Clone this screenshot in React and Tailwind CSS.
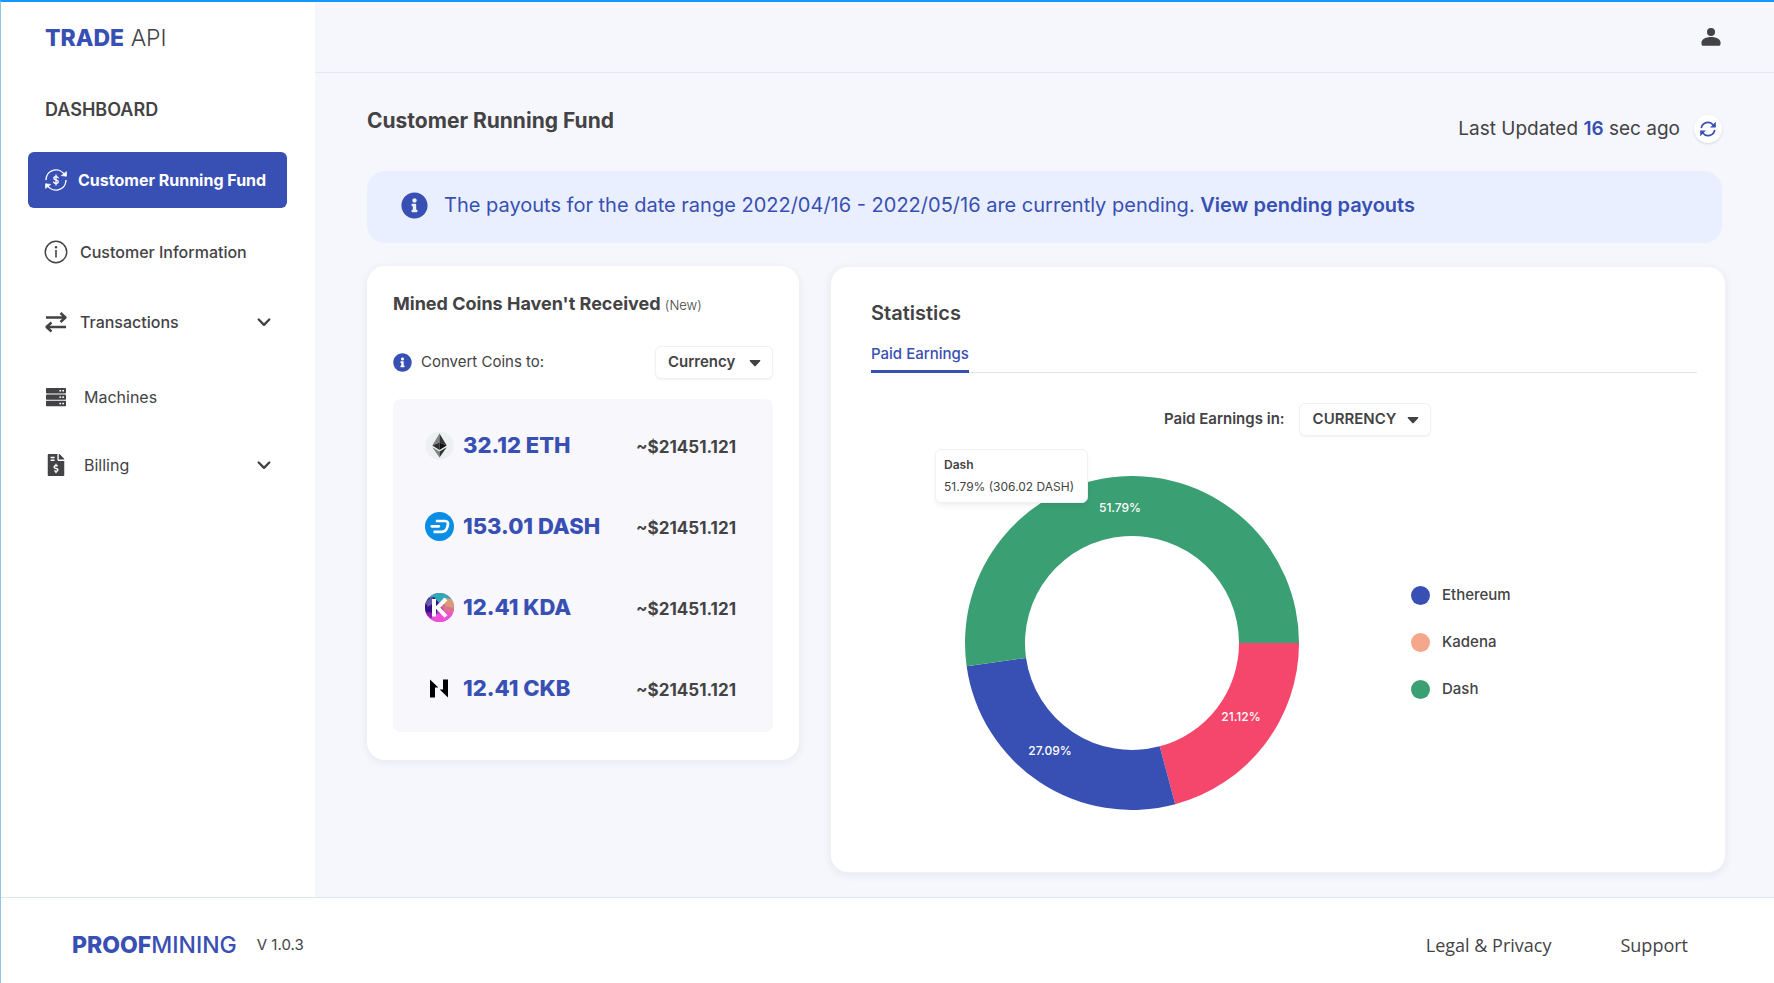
import { FaInfoCircle, FaFileInvoiceDollar } from 'react-icons/fa';

function FundIcon() {
  return (
    <svg viewBox="0 0 24 24" className="size-6 shrink-0" fill="none" stroke="currentColor" strokeWidth="1.4" strokeLinecap="round" strokeLinejoin="round" aria-hidden="true">
      <path d="M2 11.5A10 10 0 0 1 20.8 7.2" />
      <path d="M22 12.5A10 10 0 0 1 3.2 16.8" />
      <path d="M22.4 4v4.2l-4.600-.6z" fill="currentColor" strokeWidth="0.8" />
      <path d="M1.600 20v-4.200l4.600.6z" fill="currentColor" strokeWidth="0.8" />
      <path d="M14.200 9.800c-.4-.8-1.200-1.200-2.200-1.200-1.200 0-2.200.6-2.200 1.600 0 2.300 4.500 1.200 4.500 3.600 0 1-1 1.600-2.300 1.600-1.100 0-2-.5-2.400-1.300M12 7v10" strokeWidth="1.3" />
    </svg>
  );
}

function InfoOutlineIcon() {
  return (
    <svg viewBox="0 0 24 24" className="size-6 shrink-0" fill="none" stroke="currentColor" strokeWidth="1.5" aria-hidden="true">
      <circle cx="12" cy="12" r="10.7" />
      <path d="M12 10v7.500" strokeWidth="1.600" />
      <circle cx="12" cy="7.200" r="1.200" fill="currentColor" stroke="none" />
    </svg>
  );
}

function TransferIcon() {
  return (
    <svg viewBox="0 0 24 24" className="size-6 shrink-0" fill="none" stroke="currentColor" strokeWidth="2.400" strokeLinejoin="round" aria-hidden="true">
      <path d="M2 7.500h18.500M16.500 3l5 4.500-5 4.500" />
      <path d="M22 17H3.500M7.500 12.500l-5 4.500 5 4.500" />
    </svg>
  );
}

function ServerIcon() {
  return (
    <svg viewBox="0 0 24 24" className="size-6 shrink-0" aria-hidden="true">
      {[3, 9.4, 15.8].map((y) => (
        <g key={y}>
          <rect x="2" y={y} width="20" height="5.4" rx="0.8" fill="currentColor" />
          <rect x="15.4" y={y + 2} width="1.700" height="1.500" fill="white" />
          <rect x="18.300" y={y + 2} width="1.700" height="1.500" fill="white" />
        </g>
      ))}
    </svg>
  );
}

function BillingIcon() {
  return (
    <span className="flex w-6 shrink-0 justify-center">
      <FaFileInvoiceDollar className="size-[22px]" aria-hidden="true" />
    </span>
  );
}

function ChevronIcon() {
  return (
    <svg viewBox="0 0 14 14" className="size-[14px] shrink-0" fill="none" stroke="currentColor" strokeWidth="2.400" strokeLinecap="round" strokeLinejoin="round" aria-hidden="true">
      <path d="M1.700 4.500 7 9.800l5.300-5.300" />
    </svg>
  );
}

function PersonIcon() {
  return (
    <svg viewBox="0 0 20 20" className="size-5" fill="currentColor" aria-hidden="true">
      <circle cx="10" cy="5" r="4" />
      <path d="M.5 15.500C.5 12 5 9.900 10 9.900s9.500 2.100 9.500 5.600V17c0 1-.6 1.800-1.800 1.800H2.300C1.100 18.800.5 18 .5 17z" />
    </svg>
  );
}

function RefreshIcon() {
  return (
    <svg viewBox="0 0 16 16" className="size-4" fill="none" stroke="currentColor" strokeWidth="1.700" aria-hidden="true">
      <path d="M1.300 7.200A6.700 6.700 0 0 1 13.200 4" />
      <path d="M14.700 8.800A6.700 6.700 0 0 1 2.800 12" />
      <path d="M15.800.8v5.700h-5.700z" fill="currentColor" stroke="none" />
      <path d="M.2 15.200V9.500h5.700z" fill="currentColor" stroke="none" />
    </svg>
  );
}

function CaretIcon() {
  return (
    <svg viewBox="0 0 12 8" className="pointer-events-none absolute top-1/2 right-3 h-2 w-3 -translate-y-1/2" fill="currentColor" aria-hidden="true">
      <path d="M1.400 1h9.200c.7 0 1 .7.5 1.200L6.700 6.900a1 1 0 0 1-1.400 0L.9 2.200C.4 1.700.7 1 1.400 1z" />
    </svg>
  );
}

function EthLogo() {
  return (
    <svg viewBox="0 0 29 29" className="size-[29px] shrink-0" aria-hidden="true">
      <circle cx="14.500" cy="14.500" r="14" fill="#ecf0f0" />
      <path d="M14.500 2.500 7.300 14.600l7.200-3.200z" fill="#828384" />
      <path d="m14.500 2.500 7.200 12.100-7.200-3.200z" fill="#343535" />
      <path d="m7.300 14.600 7.200-3.200v7.500z" fill="#2f3030" />
      <path d="m21.700 14.600-7.200-3.200v7.500z" fill="#131313" />
      <path d="m7.300 16.200 7.200 4.300v6z" fill="#828384" />
      <path d="m21.700 16.200-7.200 4.300v6z" fill="#343535" />
    </svg>
  );
}

function DashLogo() {
  return (
    <svg viewBox="0 0 29 29" className="size-[29px] shrink-0" aria-hidden="true">
      <circle cx="14.500" cy="14.500" r="14.500" fill="#0a8de4" />
      <path d="M10.800 9h9.200c2.500 0 3.500 1.800 2.800 4.200l-.6 2.200c-.8 2.700-2.600 4.400-5.300 4.400H8.500" fill="none" stroke="white" strokeWidth="2.700" />
      <path d="M6.800 14.300h7" stroke="white" strokeWidth="2.700" strokeLinecap="round" />
    </svg>
  );
}

function KadenaLogo() {
  return (
    <svg viewBox="0 0 29 29" className="size-[29px] shrink-0" aria-hidden="true">
      <defs>
        <clipPath id="kda-disc">
          <circle cx="14.500" cy="14.500" r="14.500" />
        </clipPath>
      </defs>
      <g clipPath="url(#kda-disc)">
        <rect width="29" height="29" fill="#b23fb4" />
        <path d="M0 0h29v8L14 9 0 11z" fill="#2fa9b5" />
        <path d="M0 6l9-2 5 6-3 12-11 1z" fill="#35128c" />
        <path d="M0 9l7-5 3 5-7 5z" fill="#6559a8" />
        <path d="M18 5l11 1v10l-9-1z" fill="#d99a78" />
        <path d="M16 12l8 2 5 1v7l-9-2z" fill="#e0708f" />
        <path d="M0 20l12 1 10-2 7 2v8H0z" fill="#ee4fd6" />
        <path d="M0 19l9 1-3 6z" fill="#8d1fb0" />
        <path d="M9 6v17.500M21 6l-8.500 8.500 8.500 9" fill="none" stroke="white" strokeWidth="4" />
      </g>
    </svg>
  );
}

function NervosLogo() {
  return (
    <svg viewBox="0 0 29 29" className="size-[29px] shrink-0" aria-hidden="true">
      <path d="M5 5.500 13.300 13.500H10V23.500H5z" fill="black" />
      <path d="M23 23.500 14.700 15.500H18V5.500h5z" fill="black" />
    </svg>
  );
}

const coins = [
  { logo: EthLogo, amount: '32.12 ETH', value: '~$21451.121' },
  { logo: DashLogo, amount: '153.01 DASH', value: '~$21451.121' },
  { logo: KadenaLogo, amount: '12.41 KDA', value: '~$21451.121' },
  { logo: NervosLogo, amount: '12.41 CKB', value: '~$21451.121' },
];

const slices = [
  { from: 0, to: 75, color: '#f4476b', label: '21.12%', x: 276, y: 240 },
  { from: 75, to: 172, color: '#384fb3', label: '27.09%', x: 85, y: 274 },
  { from: 172, to: 360, color: '#3a9f73', label: '51.79%', x: 155, y: 31 },
];

function ringPath(from, to) {
  const c = 167;
  const outer = 167;
  const inner = 107;
  const at = (r, deg) => {
    const a = (deg * Math.PI) / 180;
    return `${c + r * Math.cos(a)} ${c + r * Math.sin(a)}`;
  };
  const large = to - from > 180 ? 1 : 0;
  return `M${at(outer, from)}A${outer} ${outer} 0 ${large} 1 ${at(outer, to)}L${at(inner, to)}A${inner} ${inner} 0 ${large} 0 ${at(inner, from)}Z`;
}

function Donut() {
  return (
    <div className="relative">
      <svg viewBox="0 0 334 334" className="size-[334px]" role="img" aria-label="Paid earnings by coin">
        {slices.map((s) => (
          <path key={s.label} d={ringPath(s.from, s.to)} fill={s.color} />
        ))}
        {slices.map((s) => (
          <text key={s.label} x={s.x} y={s.y} textAnchor="middle" dominantBaseline="central" fill="white" className="text-xs font-medium">
            {s.label}
          </text>
        ))}
      </svg>
      <div className="absolute -top-[27px] -left-[30px] flex min-w-[153px] flex-col gap-1 rounded-md border border-[#f1f1f3] bg-white px-2 py-[6px] whitespace-nowrap shadow-md shadow-black/5">
        <span className="text-xs leading-[18px] font-semibold">Dash</span>
        <span className="text-xs leading-[18px]">51.79% (306.02 DASH)</span>
      </div>
    </div>
  );
}

const legend = [
  { name: 'Ethereum', dot: 'bg-[#384fb3]' },
  { name: 'Kadena', dot: 'bg-[#f6a68b]' },
  { name: 'Dash', dot: 'bg-[#3a9f73]' },
];

function Sidebar() {
  return (
    <aside className="w-[314px] shrink-0 bg-white">
      <div className="px-11 pt-[21px] text-[23px] leading-[30px]">
        <span className="font-extrabold text-[#384fb3]">TRADE</span> <span className="font-light">API</span>
      </div>
      <h2 className="px-11 pt-[45px] text-lg leading-6 font-semibold">DASHBOARD</h2>
      <nav className="flex flex-col pt-[30px] pr-7 pl-[27px] text-base" aria-label="Dashboard">
        <a href="#fund" className="flex h-14 items-center gap-[10px] rounded-md bg-[#384fb3] px-4 font-bold whitespace-nowrap text-white" aria-current="page">
          <FundIcon />
          Customer Running Fund
        </a>
        <a href="#information" className="mt-4 flex h-14 items-center gap-3 px-4 font-medium">
          <InfoOutlineIcon />
          Customer Information
        </a>
        <button type="button" className="mt-[14px] flex h-14 items-center gap-3 px-4 text-left font-medium">
          <TransferIcon />
          <span className="flex-1">Transactions</span>
          <ChevronIcon />
        </button>
        <a href="#machines" className="mt-[19px] flex h-14 items-center gap-4 px-4">
          <ServerIcon />
          Machines
        </a>
        <button type="button" className="mt-3 flex h-14 items-center gap-4 px-4 text-left">
          <BillingIcon />
          <span className="flex-1">Billing</span>
          <ChevronIcon />
        </button>
      </nav>
    </aside>
  );
}

function CoinsCard() {
  return (
    <section className="w-[432px] shrink-0 rounded-[18px] bg-white px-[26px] pt-[25px] pb-7 shadow-[0_2px_8px_rgba(40,50,90,0.08)]">
      <h2 className="text-lg leading-[26px] font-bold whitespace-nowrap">
        Mined Coins Haven't Received <span className="text-[13px] font-light">(New)</span>
      </h2>
      <div className="mt-7 flex items-center justify-between">
        <label htmlFor="convert" className="flex items-center gap-[9px] text-[15px]">
          <FaInfoCircle className="size-[19px] text-[#384fb3]" aria-hidden="true" />
          Convert Coins to:
        </label>
        <div className="relative">
          <select id="convert" className="h-[33px] w-[118px] appearance-none rounded-md border border-[#f1f1f4] bg-white pl-3 text-[15px] font-semibold shadow-xs">
            <option>Currency</option>
          </select>
          <CaretIcon />
        </div>
      </div>
      <ul className="mt-5 flex flex-col gap-[41px] rounded-lg bg-[#f7f7fc] pt-[26px] pr-[37px] pb-6 pl-8">
        {coins.map(({ logo: Logo, amount, value }) => (
          <li key={amount} className="flex h-10 items-center">
            <Logo />
            <span className="ml-[9px] flex-1 text-[22px] font-extrabold text-[#384fb3]">{amount}</span>
            <span className="pt-[6px] text-[17px] font-bold">{value}</span>
          </li>
        ))}
      </ul>
    </section>
  );
}

function StatisticsCard() {
  return (
    <section className="min-w-0 flex-1 rounded-[18px] border border-[#f0f1f5] bg-white px-10 pt-8 pb-[62px] shadow-[0_2px_8px_rgba(40,50,90,0.08)]">
      <h2 className="text-xl leading-7 font-semibold">Statistics</h2>
      <div className="-mr-3 mt-3 flex border-b border-[#e3e4e8]" role="tablist">
        <button type="button" role="tab" aria-selected="true" className="-mb-px border-b-3 border-[#384fb3] pt-1 pb-[5px] text-[15px] leading-[22px] font-medium text-[#384fb3]">
          Paid Earnings
        </button>
      </div>
      <div className="mt-[30px] ml-[293px] flex items-center gap-[14px]">
        <label htmlFor="earnings" className="text-[15px] font-semibold">Paid Earnings in:</label>
        <div className="relative">
          <select id="earnings" className="h-[33px] w-[132px] appearance-none rounded-md border border-[#f1f1f4] bg-white pl-[13px] text-[15px] font-semibold shadow-xs">
            <option>CURRENCY</option>
          </select>
          <CaretIcon />
        </div>
      </div>
      <div className="mt-10 ml-[94px] flex items-center gap-28">
        <Donut />
        <ul className="flex flex-col gap-[25px] pb-[2px]">
          {legend.map((item) => (
            <li key={item.name} className="flex items-center gap-3 text-[15px] leading-[22px] font-medium">
              <span className={`size-[19px] rounded-full ${item.dot}`} />
              {item.name}
            </li>
          ))}
        </ul>
      </div>
    </section>
  );
}

export default function App() {
  return (
    <div className="flex min-h-screen flex-col border-t-2 border-l border-t-[#1297fb] border-l-[#90c5e6] bg-[#f6f7fc] font-['Inter','Liberation_Sans',sans-serif] text-[#434345]">
      <div className="flex flex-1">
        <Sidebar />
        <div className="flex min-w-0 flex-1 flex-col">
          <header className="flex h-[71px] items-center justify-end border-b border-[#e4e8f0] pr-[53px]">
            <button type="button" aria-label="Account">
              <PersonIcon />
            </button>
          </header>
          <main className="flex-1 pt-[34px] pr-12 pb-6 pl-[52px]">
            <div className="flex items-start justify-between pr-1">
              <h1 className="text-[21px] leading-7 font-bold">Customer Running Fund</h1>
              <div className="flex items-center gap-[14px] pt-2">
                <p className="text-[19px] leading-7">
                  Last Updated <span className="font-semibold text-[#384fb3]">16</span> sec ago
                </p>
                <button type="button" aria-label="Refresh" className="flex size-7 items-center justify-center rounded-full bg-white text-[#384fb3] shadow-sm">
                  <RefreshIcon />
                </button>
              </div>
            </div>
            <div className="mt-7 mr-1 flex h-[72px] items-center gap-4 rounded-[18px] bg-[#e9effe] px-[34px] pb-1 text-xl text-[#384fb3]">
              <FaInfoCircle className="size-[27px] shrink-0" aria-hidden="true" />
              <p>
                The payouts for the date range 2022/04/16 - 2022/05/16 are currently pending.{' '}
                <a href="#pending" className="font-semibold">View pending payouts</a>
              </p>
            </div>
            <div className="mt-[23px] flex items-start gap-[31px]">
              <CoinsCard />
              <StatisticsCard />
            </div>
          </main>
        </div>
      </div>
      <footer className="flex items-center border-t border-[#e0e6ee] bg-white pt-9 pr-[86px] pb-[30px] pl-[71px]">
        <span className="text-[23px] leading-5 text-[#384fb3]">
          <span className="font-extrabold">PROOF</span>
          <span className="font-medium">MINING</span>
        </span>
        <span className="ml-5 text-[15px]">V 1.0.3</span>
        <nav className="ml-auto flex gap-[69px] font-['Open_Sans','Noto_Sans',sans-serif] text-lg leading-5" aria-label="Footer">
          <a href="#legal">Legal &amp; Privacy</a>
          <a href="#support">Support</a>
        </nav>
      </footer>
    </div>
  );
}
